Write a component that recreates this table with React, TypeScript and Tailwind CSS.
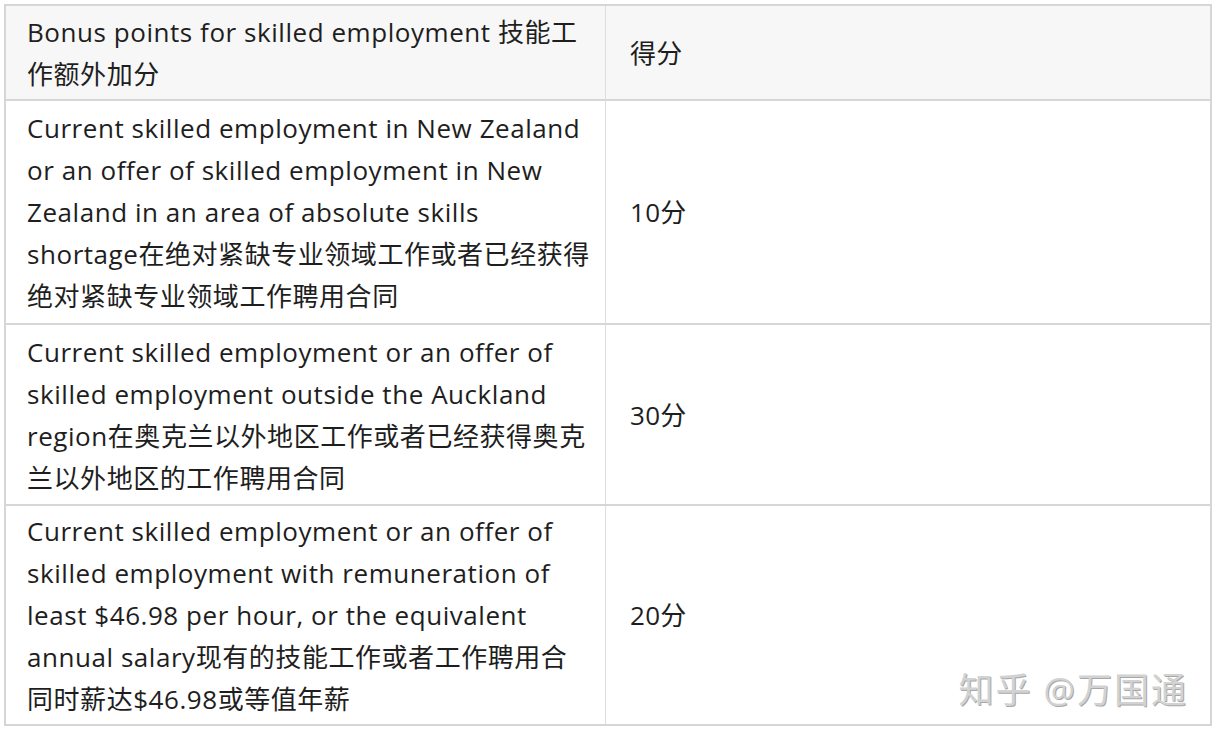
import React from "react";

const rows: { left: string; right: string; h: string; bg?: string }[] = [
  { left: "Bonus points for skilled employment 技能工作额外加分", right: "得分", h: "h-[95px]", bg: "bg-[#f7f7f7]" },
  {
    left: "Current skilled employment in New Zealand or an offer of skilled employment in New Zealand in an area of absolute skills shortage在绝对紧缺专业领域工作或者已经获得绝对紧缺专业领域工作聘用合同",
    right: "10分",
    h: "h-[224px]",
  },
  {
    left: "Current skilled employment or an offer of skilled employment outside the Auckland region在奥克兰以外地区工作或者已经获得奥克兰以外地区的工作聘用合同",
    right: "30分",
    h: "h-[181px]",
  },
  {
    left: "Current skilled employment or an offer of skilled employment with remuneration of least $46.98 per hour, or the equivalent annual salary现有的技能工作或者工作聘用合同时薪达$46.98或等值年薪",
    right: "20分",
    h: "h-[218px]",
  },
];

export default function App() {
  return (
    <div
      className="w-[1217px] h-[730px] bg-white pt-[4px] pl-[4px] text-[#1e1e1e]"
      style={{ fontFamily: '"Open Sans", "Noto Sans CJK SC", sans-serif' }}
    >
      <div className="relative w-[1208px] border-2 border-[#d6d6d6] flex flex-col">
        {rows.map((r, i) => (
          <div
            key={i}
            className={`flex ${r.h} ${r.bg ?? "bg-white"} ${i < rows.length - 1 ? "border-b-2 border-[#d6d6d6]" : ""}`}
          >
            <div className="w-[600px] border-r border-[#dedede] flex items-center pl-[21px] pr-[12px]">
              <p className="text-[26px] leading-[42px] tracking-[0.55px]">{r.left}</p>
            </div>
            <div className="flex-1 flex items-center pl-[24px]">
              <p className="text-[26px] leading-[42px] tracking-[0.3px]">{r.right}</p>
            </div>
          </div>
        ))}
        <div
          className="absolute right-[22px] bottom-[17px] text-[35px] leading-none text-[#d2d2d2] tracking-[2px]"
          style={{ textShadow: "1px 1px 0 #a8a8a8" }}
        >
          知乎 @万国通
        </div>
      </div>
    </div>
  );
}
